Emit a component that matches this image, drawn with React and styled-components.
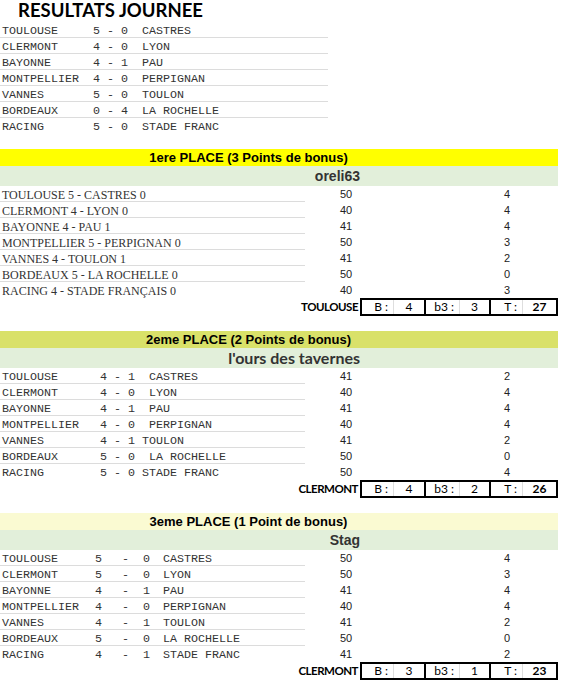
import React from 'react';
import styled, { createGlobalStyle } from 'styled-components';

const Global = createGlobalStyle`
  html, body { margin: 0; padding: 0; background: #fff; }
  * { box-sizing: border-box; }
`;

const Page = styled.div`
  width: 558px;
  color: #333;
  font-family: "Liberation Sans", Arial, sans-serif;
`;

const Title = styled.h1`
  margin: 0;
  height: 22px;
  padding-left: 18px;
  font: 700 18.5px/21px Lato, "Open Sans", sans-serif;
  color: #000;
`;

const ResultsList = styled.div`
  width: 328px;
  margin-bottom: 15px;
`;

const MatchRow = styled.div`
  display: grid;
  grid-template-columns: ${(p) => p.$cols};
  height: 16px;
  padding-top: 1px;
  font: 11.67px/17px "Liberation Mono", "Courier New", monospace;
  color: #333;
  white-space: pre;
  border-bottom: 1px solid #dcdcdc;
  &:last-child { border-bottom: none; }
`;

const TeamCell = styled.span`
  padding-left: 2px;
`;

const Section = styled.section`
  margin-bottom: 15px;
`;

const PlaceBar = styled.div`
  height: 17px;
  background: ${(p) => p.$bg};
  font: 700 13px/17px "Liberation Sans", Arial, sans-serif;
  color: #000;
`;

const PlaceText = styled.div`
  width: 497px;
  text-align: center;
`;

const PlayerBar = styled.div`
  height: 20px;
  background: #e2efda;
`;

const PlayerName = styled.div`
  width: 360px;
  text-align: right;
  font: 700 ${(p) => p.$size}px/20px ${(p) => p.$family};
  color: #333;
`;

const DataRow = styled.div`
  display: grid;
  grid-template-columns: 305px 199px 1fr;
  height: 16px;
`;

const MatchCell = styled.div`
  display: grid;
  grid-template-columns: ${(p) => p.$cols};
  height: 16px;
  padding-top: 1px;
  border-bottom: 1px solid #dcdcdc;
  white-space: pre;
  color: #333;
  font: ${(p) => (p.$serif ? '12px/17px "Liberation Serif", "Times New Roman", serif' : '11.67px/17px "Liberation Mono", "Courier New", monospace')};
  ${DataRow}:last-of-type & { border-bottom: none; }
`;

const NumCell = styled.div`
  font: 11px/16px "Liberation Sans", Arial, sans-serif;
  color: #222;
  padding-left: ${(p) => p.$pad}px;
`;

const FooterRow = styled.div`
  display: grid;
  grid-template-columns: 360px 198px;
  height: 18px;
`;

const FooterTeam = styled.div`
  text-align: right;
  padding-right: 2px;
  font: 700 11.5px/18px Lato, "Open Sans", sans-serif;
  color: #000;
  letter-spacing: -0.5px;
`;

const ScoreBox = styled.div`
  display: flex;
  border: 2px solid #000;
  height: 18px;
`;

const ScoreCell = styled.div`
  display: grid;
  grid-template-columns: ${(p) => p.$label}px 1fr;
  width: ${(p) => p.$w}px;
  border-left: ${(p) => (p.$first ? 'none' : '2px solid #000')};
  font: 12px/14px Lato, "Open Sans", sans-serif;
  color: #000;
`;

const ScoreLabel = styled.span`
  text-align: right;
  padding-right: 5px;
  border-right: 1px solid #dedede;
`;

const ScoreValue = styled.span`
  text-align: center;
  font-weight: ${(p) => (p.$bold ? 700 : 400)};
`;

const top = [
  ['TOULOUSE', '5 - 0  CASTRES'],
  ['CLERMONT', '4 - 0  LYON'],
  ['BAYONNE', '4 - 1  PAU'],
  ['MONTPELLIER', '4 - 0  PERPIGNAN'],
  ['VANNES', '5 - 0  TOULON'],
  ['BORDEAUX', '0 - 4  LA ROCHELLE'],
  ['RACING', '5 - 0  STADE FRANC'],
];

const sections = [
  {
    title: '1ere PLACE (3 Points de bonus)',
    bg: '#ffff00',
    player: 'oreli63',
    pFont: '"Liberation Sans", Arial, sans-serif',
    pSize: 14,
    serif: true,
    cols: '1fr',
    rows: [
      [['TOULOUSE 5 - CASTRES 0'], '50', '4'],
      [['CLERMONT 4 - LYON 0'], '40', '4'],
      [['BAYONNE 4 - PAU 1'], '41', '4'],
      [['MONTPELLIER 5 - PERPIGNAN 0'], '50', '3'],
      [['VANNES 4 - TOULON 1'], '41', '2'],
      [['BORDEAUX 5 - LA ROCHELLE 0'], '50', '0'],
      [['RACING 4 - STADE FRANÇAIS 0'], '40', '3'],
    ],
    footer: { team: 'TOULOUSE', b: 4, b3: 3, t: 27 },
  },
  {
    title: '2eme PLACE (2 Points de bonus)',
    bg: '#d9e169',
    player: "l'ours des tavernes",
    pFont: 'Lato, "Open Sans", sans-serif',
    pSize: 16,
    cols: '100px 1fr',
    rows: [
      [['TOULOUSE', '4 - 1  CASTRES'], '41', '2'],
      [['CLERMONT', '4 - 0  LYON'], '40', '4'],
      [['BAYONNE', '4 - 1  PAU'], '41', '4'],
      [['MONTPELLIER', '4 - 0  PERPIGNAN'], '40', '4'],
      [['VANNES', '4 - 1 TOULON'], '41', '2'],
      [['BORDEAUX', '5 - 0  LA ROCHELLE'], '50', '0'],
      [['RACING', '5 - 0 STADE FRANC'], '50', '4'],
    ],
    footer: { team: 'CLERMONT', b: 4, b3: 2, t: 26 },
  },
  {
    title: '3eme PLACE (1 Point de bonus)',
    bg: '#fafad2',
    player: 'Stag',
    pFont: '"Liberation Sans", Arial, sans-serif',
    pSize: 14,
    cols: '95px 27px 21px 20px 1fr',
    rows: [
      [['TOULOUSE', '5', '-', '0', 'CASTRES'], '50', '4'],
      [['CLERMONT', '5', '-', '0', 'LYON'], '50', '3'],
      [['BAYONNE', '4', '-', '1', 'PAU'], '41', '4'],
      [['MONTPELLIER', '4', '-', '0', 'PERPIGNAN'], '40', '4'],
      [['VANNES', '4', '-', '1', 'TOULON'], '41', '2'],
      [['BORDEAUX', '5', '-', '0', 'LA ROCHELLE'], '50', '0'],
      [['RACING', '4', '-', '1', 'STADE FRANC'], '41', '2'],
    ],
    footer: { team: 'CLERMONT', b: 3, b3: 1, t: 23 },
  },
];

function Footer({ team, b, b3, t }) {
  return (
    <FooterRow>
      <FooterTeam>{team}</FooterTeam>
      <ScoreBox>
        <ScoreCell $first $w={62} $label={32}>
          <ScoreLabel>B :</ScoreLabel>
          <ScoreValue>{b}</ScoreValue>
        </ScoreCell>
        <ScoreCell $w={65} $label={34}>
          <ScoreLabel>b3 :</ScoreLabel>
          <ScoreValue>{b3}</ScoreValue>
        </ScoreCell>
        <ScoreCell $w={67} $label={32}>
          <ScoreLabel>T :</ScoreLabel>
          <ScoreValue $bold>{t}</ScoreValue>
        </ScoreCell>
      </ScoreBox>
    </FooterRow>
  );
}

export default function App() {
  return (
    <Page>
      <Global />
      <Title>RESULTATS JOURNEE</Title>
      <ResultsList>
        {top.map(([team, score]) => (
          <MatchRow key={team} $cols="93px 1fr">
            <TeamCell>{team}</TeamCell>
            <span>{score}</span>
          </MatchRow>
        ))}
      </ResultsList>
      {sections.map((s) => (
        <Section key={s.title}>
          <PlaceBar $bg={s.bg}>
            <PlaceText>{s.title}</PlaceText>
          </PlaceBar>
          <PlayerBar>
            <PlayerName $family={s.pFont} $size={s.pSize}>{s.player}</PlayerName>
          </PlayerBar>
          <div>
            {s.rows.map(([parts, pts, bonus], i) => (
              <DataRow key={i}>
                <MatchCell $cols={s.cols} $serif={s.serif}>
                  {parts.map((p, j) => (j === 0 ? <TeamCell key={j}>{p}</TeamCell> : <span key={j}>{p}</span>))}
                </MatchCell>
                <NumCell $pad={35}>{pts}</NumCell>
                <NumCell $pad={0}>{bonus}</NumCell>
              </DataRow>
            ))}
          </div>
          <Footer {...s.footer} />
        </Section>
      ))}
    </Page>
  );
}
